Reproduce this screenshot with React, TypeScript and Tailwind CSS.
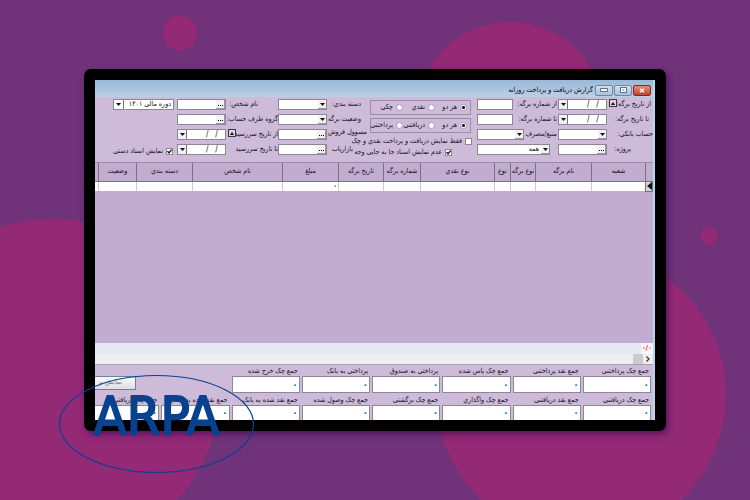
import React from "react";

type Kind = "text" | "select" | "lookup" | "date" | "period";

type FieldProps = {
  label: string;
  kind: Kind;
  labelClass: string;
  width?: string;
  spin?: boolean;
  value?: string;
  hideLabel?: boolean;
};

function Down() {
  return (
    <svg viewBox="0 0 5 3" className="h-[3px] w-[5px]" aria-hidden="true">
      <path d="M0 0h5L2.5 3z" fill="#111" />
    </svg>
  );
}

function Field({ label, kind, labelClass, width = "w-[49px]", spin, value = "", hideLabel }: FieldProps) {
  const id = React.useId();
  return (
    <div className="flex h-[11px] items-center">
      {hideLabel ? (
        <span className={`shrink-0 ${labelClass}`} />
      ) : (
        <label htmlFor={id} className={`shrink-0 whitespace-nowrap ${labelClass}`}>
          {label}
        </label>
      )}
      {spin && (
        <button
          aria-label="تغییر تاریخ"
          className="me-[2px] flex h-[8px] w-[8px] shrink-0 items-center justify-center self-start border border-[#3a343f] bg-[#d9d3de]"
        >
          <svg viewBox="0 0 4 3" className="h-[3px] w-[4px]" aria-hidden="true">
            <path d="M0 3h4L2 0z" fill="#111" />
          </svg>
        </button>
      )}
      <div className={`relative flex h-[11px] shrink-0 border border-[#8d8793] bg-white ${width}`}>
        {kind === "lookup" && (
          <button
            aria-label={`انتخاب ${label}`}
            className="flex w-[9px] shrink-0 items-end justify-center gap-px border-s border-b border-[#9d97a3] bg-[#f3f0f5] pb-[2px]"
          >
            <i className="size-px bg-black" />
            <i className="size-px bg-black" />
            <i className="size-px bg-black" />
          </button>
        )}
        {kind === "select" || kind === "period" ? (
          <>
            <select
              id={id}
              aria-label={hideLabel ? label : undefined}
              className={`w-full appearance-none bg-transparent text-[7px] leading-[9px] outline-none ${
                kind === "select" ? "ps-[10px]" : "ps-[2px]"
              }`}
            >
              <option>{value}</option>
            </select>
            <span
              className={`pointer-events-none absolute inset-y-0 flex items-center justify-center ${
                kind === "select"
                  ? "right-0 w-[8px] border-b border-[#9d97a3] bg-[#f3f0f5]"
                  : "left-0 w-[10px] border-r border-[#77717d]"
              }`}
            >
              <Down />
            </span>
          </>
        ) : (
          <input
            id={id}
            dir="ltr"
            defaultValue={value}
            className="min-w-0 flex-1 bg-transparent ps-[19px] text-[8px] leading-[9px] outline-none"
          />
        )}
        {kind === "date" && (
          <button
            aria-label="باز کردن تقویم"
            className="flex w-[9px] shrink-0 items-center justify-center border-s border-[#77717d] bg-[#f3f0f5]"
          >
            <Down />
          </button>
        )}
      </div>
    </div>
  );
}

function RadioGroup({ name, options }: { name: string; options: string[] }) {
  return (
    <fieldset className="flex h-[15px] w-[101px] items-center border border-[#9a8da6] ps-[3px] pt-[2px]">
      {options.map((option, i) => (
        <label key={option} className="flex w-[32px] items-center gap-[3px] whitespace-nowrap">
          <input
            type="radio"
            name={name}
            defaultChecked={i === 0}
            className="size-[7px] shrink-0 appearance-none rounded-full border border-[#a59dad] bg-white checked:bg-[radial-gradient(circle,#111_0_1px,#fff_2px)]"
          />
          {option}
        </label>
      ))}
    </fieldset>
  );
}

function Check({ label, checked }: { label: string; checked?: boolean }) {
  return (
    <label className="flex h-[8px] items-center gap-[3px] whitespace-nowrap leading-[8px]">
      <span className="relative flex size-[7px] shrink-0">
        <input type="checkbox" defaultChecked={checked} className="size-[7px] appearance-none border border-[#8d8793] bg-white" />
        {checked && (
          <svg viewBox="0 0 7 7" className="pointer-events-none absolute inset-0 size-[7px]" aria-hidden="true">
            <path d="M1.5 3.2L3 5l2.6-3.4" fill="none" stroke="#111" strokeWidth="1.3" />
          </svg>
        )}
      </span>
      {label}
    </label>
  );
}

const columns = [
  { title: "شعبه", width: "w-[54px]" },
  { title: "نام برگه", width: "w-[56px]" },
  { title: "نوع برگه", width: "w-[25px]" },
  { title: "نوع", width: "w-[16px]" },
  { title: "نوع نقدي", width: "w-[74px]" },
  { title: "شماره برگه", width: "w-[37px]" },
  { title: "تاریخ برگه", width: "w-[45px]" },
  { title: "مبلغ", width: "w-[56px]" },
  { title: "نام شخص", width: "w-[90px]" },
  { title: "دسته بندي", width: "w-[56px]" },
  { title: "وضعیت", width: "w-[38px]" },
  { title: "", width: "" },
];

const paid = [
  "جمع چک پرداختنی",
  "جمع نقد پرداختنی",
  "جمع چک پاس شده",
  "پرداختی به صندوق",
  "پرداختی به بانک",
  "جمع چک خرج شده",
];

const received = [
  "جمع چک دریافتنی",
  "جمع نقد دریافتنی",
  "جمع چک واگذاري",
  "جمع چک برگشتی",
  "جمع چک وصول شده",
  "جمع نقد شده به بانک",
  "جمع نقد شده به صندوق",
  "جمع چک دریافتی مو",
];

function Total({ label, last }: { label: string; last?: boolean }) {
  return (
    <label className="flex min-w-0 flex-col whitespace-nowrap">
      <span className="h-[9px] ps-[2px] leading-[9px]">{label}</span>
      <input
        readOnly
        defaultValue="۰"
        className={`w-full border border-[#8d8793] bg-white px-px text-[10px] font-bold text-[#0078c8] outline-none ${
          last ? "h-[15px] border-b-0" : "h-[17px]"
        }`}
      />
    </label>
  );
}

const winButton =
  "flex h-[11px] w-[18px] items-center justify-center rounded-[2px] border";

export default function App() {
  return (
    <div className="relative isolate min-h-screen overflow-hidden bg-[#703379] px-[84px] pt-[69px] font-['DejaVu_Sans_Condensed','DejaVu_Sans',sans-serif] text-[7px] leading-[9px] text-[#140d1c]">
      <svg
        viewBox="0 0 750 500"
        preserveAspectRatio="xMidYMid slice"
        className="absolute inset-0 -z-10 size-full"
        fill="#942975"
        aria-hidden="true"
      >
        <circle cx="180" cy="33" r="17.5" />
        <circle cx="510" cy="116" r="94" />
        <circle cx="53" cy="387" r="168" />
        <circle cx="581" cy="395" r="145" />
        <circle cx="709" cy="235.5" r="9" />
      </svg>

      <main
        dir="rtl"
        className="overflow-hidden rounded-[7px] border-[11px] border-black bg-black shadow-[2px_3px_6px_rgba(60,10,80,0.7)]"
      >
        <div className="overflow-hidden border-r-2 border-[#b5d9ea] bg-[#cdbbd9]">
          <header className="flex h-[17px] items-center gap-px bg-linear-to-b from-[#9ab8d6] to-[#bad0e7] ps-[2px] pt-[3px]">
            <button aria-label="بستن" className={`${winButton} border-[#7c2c22] bg-linear-to-b from-[#e08e80] to-[#c2402c]`}>
              <svg viewBox="0 0 6 5" className="h-[5px] w-[6px]" aria-hidden="true">
                <path d="M1 .7l4 3.6M5 .7L1 4.3" stroke="#fff" strokeWidth="1.4" />
              </svg>
            </button>
            <button aria-label="بزرگ کردن" className={`${winButton} border-[#6f87a1] bg-linear-to-b from-[#d3e0ee] to-[#a9c1da]`}>
              <svg viewBox="0 0 7 6" className="h-[6px] w-[7px]" aria-hidden="true">
                <path d="M.5.5h6v5h-6z" fill="#fff" stroke="#5c6e82" />
                <path d="M2.5 2.5h2v1h-2z" fill="#5c6e82" />
              </svg>
            </button>
            <button aria-label="کوچک کردن" className={`${winButton} border-[#6f87a1] bg-linear-to-b from-[#d3e0ee] to-[#a9c1da]`}>
              <svg viewBox="0 0 8 4" className="h-[4px] w-[8px]" aria-hidden="true">
                <path d="M.5.5h7v3h-7z" fill="#fff" stroke="#5c6e82" />
              </svg>
            </button>
            <h1 className="ps-px text-[7px] text-black">گزارش دریافت و پرداخت روزانه</h1>
          </header>

          <form className="flex h-[65px] pt-[2px]">
            <div className="flex shrink-0 flex-col gap-[4px]">
              <Field label="از تاریخ برگه:" kind="date" labelClass="w-[36px] ps-[2px]" spin value="/   /" />
              <Field label="تا تاریخ برگه:" kind="date" labelClass="w-[46px] ps-[4px]" value="/   /" />
              <Field label="حساب بانکی:" kind="select" labelClass="w-[46px]" />
              <Field label="پروژه:" kind="lookup" labelClass="w-[46px] ps-[22px]" />
            </div>
            <div className="flex shrink-0 flex-col gap-[4px]">
              <Field label="از شماره برگه:" kind="text" labelClass="w-[45px] ps-px" width="w-[36px]" />
              <Field label="تا شماره برگه:" kind="text" labelClass="w-[45px] ps-px" width="w-[36px]" />
              <Field label="منبع/مصرف" kind="select" labelClass="w-[34px] ps-px" width="w-[47px]" />
              <Field label="نوع" hideLabel kind="select" labelClass="w-[8px]" width="w-[73px]" value="همه" />
            </div>
            <div className="flex w-[107px] shrink-0 flex-col gap-[3px] ps-[6px] pt-px">
              <RadioGroup name="method" options={["هر دو", "نقدي", "چکی"]} />
              <RadioGroup name="direction" options={["هر دو", "دریافتنی", "پرداختنی"]} />
              <div className="-ms-px pt-px">
                <Check label="فقط نمایش دریافت و پرداخت نقدي و چک" />
              </div>
              <div className="ps-[19px]">
                <Check label="عدم نمایش اسناد جا به جایی وجه" checked />
              </div>
            </div>
            <div className="flex shrink-0 flex-col gap-[4px]">
              <Field label="دسته بندي:" kind="select" labelClass="w-[43px] ps-[9px]" />
              <Field label="وضعیت برگه" kind="select" labelClass="w-[43px] ps-[9px]" />
              <Field label="مسوول فروش" kind="lookup" labelClass="w-[43px] ps-[3px] self-start leading-[7px]" />
              <Field label="بازاریاب" kind="lookup" labelClass="w-[43px] ps-[17px]" />
            </div>
            <div className="flex shrink-0 flex-col gap-[4px]">
              <Field label="نام شخص:" kind="lookup" labelClass="w-[52px] ps-[20px]" />
              <Field label="گروه طرف حساب:" kind="lookup" labelClass="w-[52px]" />
              <Field label="از تاریخ سررسید" kind="date" labelClass="w-[42px]" spin value="/   /" />
              <Field label="تا تاریخ سررسید" kind="date" labelClass="w-[52px]" value="/   /" />
            </div>
            <div className="flex h-[56px] shrink-0 flex-col justify-between">
              <Field label="دوره" hideLabel kind="period" labelClass="w-[3px]" width="w-[61px]" value="دوره مالی ۱۴۰۱" />
              <div className="ps-[4px]">
                <Check label="نمایش اسناد دستی" checked />
              </div>
            </div>
          </form>

          <section className="border-t border-[#9a8da6] bg-[#c2add1]">
            <table className="w-full table-fixed border-collapse">
              <thead>
                <tr className="h-[18px]">
                  <th className="w-[7px] border-e border-[#7d7188]" />
                  {columns.map((c, i) => (
                    <th
                      key={i}
                      className={`${c.width} whitespace-nowrap border-e border-b border-[#7d7188] p-0 text-center font-normal last:border-e-0`}
                    >
                      {c.title}
                    </th>
                  ))}
                </tr>
              </thead>
              <tbody>
                <tr className="h-[10px] bg-white">
                  <td className="border border-[#77717d] bg-[#d9d3de] p-0">
                    <svg viewBox="0 0 5 8" className="mx-auto h-[8px] w-[5px]" aria-hidden="true">
                      <path d="M5 0v8L0 4z" fill="#111" />
                    </svg>
                  </td>
                  {columns.map((c, i) => (
                    <td key={i} className="border-e border-[#cfc6d6] p-0 ps-px font-bold leading-[8px] last:border-e-0">
                      {c.title === "مبلغ" ? "۰" : ""}
                    </td>
                  ))}
                </tr>
              </tbody>
            </table>
            <div className="h-[151px]" />
            <div className="flex h-[11px] items-center bg-[#e6e8f2]">
              <span className="flex h-full w-[12px] items-center justify-center bg-[#f5f4f7] font-bold text-[#f0222c]">۰/۰</span>
            </div>
            <div className="flex h-[11px] items-stretch border-b border-[#a9a3ae] bg-[#efefef]">
              <button aria-label="پیمایش" className="flex w-[10px] items-center justify-center">
                <svg viewBox="0 0 4 6" className="h-[6px] w-[4px]" aria-hidden="true">
                  <path d="M.5.5L3 3 .5 5.5" fill="none" stroke="#333" strokeWidth="1.2" />
                </svg>
              </button>
              <span className="w-[10px] bg-[#cbcbcd]" />
            </div>
          </section>

          <section className="flex flex-col gap-[3px] pt-[2px]">
            <div className="-me-[4px] ms-[2px] grid grid-cols-8 gap-[2px]">
              {paid.map((label) => (
                <Total key={label} label={label} />
              ))}
              <button className="col-start-8 mt-[9px] h-[14px] w-[45px] justify-self-end whitespace-nowrap border border-[#5f8796] bg-linear-to-b from-[#fafafa] to-[#dedfe3] ps-[13px] text-start text-[#77777d]">
                نمایش بر
              </button>
            </div>
            <div className="-me-[4px] ms-[2px] grid grid-cols-8 gap-[2px]">
              {received.map((label) => (
                <Total key={label} label={label} last />
              ))}
            </div>
          </section>
        </div>
      </main>

      <svg
        viewBox="0 0 196 100"
        className="absolute left-[59px] top-[374px] h-[100px] w-[196px]"
        role="img"
        aria-label="ARPA"
      >
        <ellipse cx="97.5" cy="50" rx="97" ry="48.5" fill="none" stroke="#08428f" strokeWidth="1.2" />
        <text
          x="97.5"
          y="61"
          textAnchor="middle"
          fontFamily="'DejaVu Sans Condensed','DejaVu Sans',sans-serif"
          fontSize="54"
          fill="#08428f"
          stroke="#08428f"
          strokeWidth="2"
          strokeLinejoin="round"
        >
          ARPA
        </text>
      </svg>
    </div>
  );
}
